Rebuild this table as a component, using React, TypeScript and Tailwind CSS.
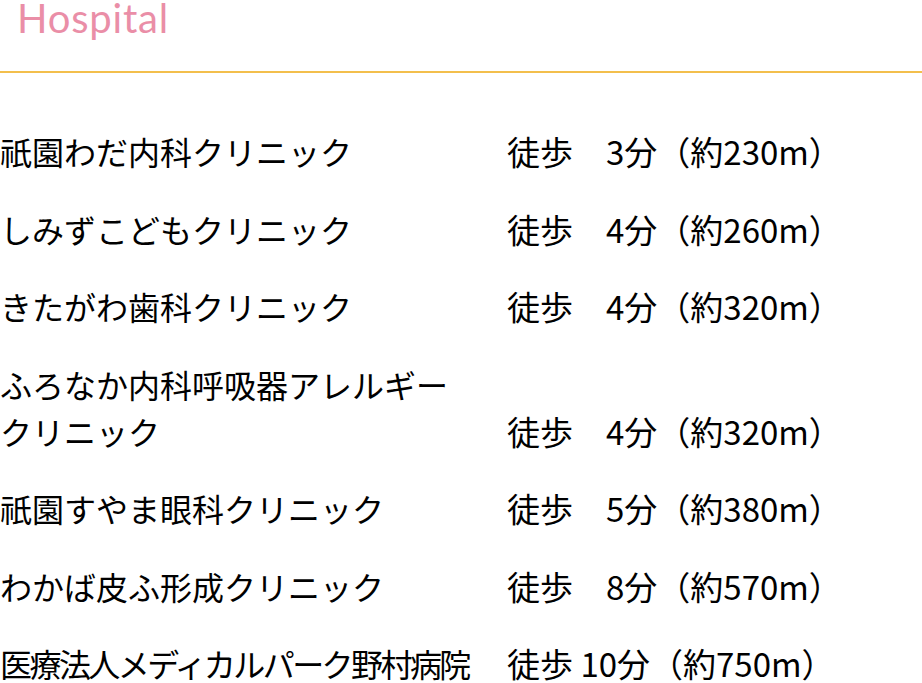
import React from 'react';

type Hospital = {
  name: React.ReactNode;
  walk: string;
  tight?: boolean;
};

const hospitals: Hospital[] = [
  { name: '祇園わだ内科クリニック', walk: '徒歩　3分（約230m）' },
  { name: 'しみずこどもクリニック', walk: '徒歩　4分（約260m）' },
  { name: 'きたがわ歯科クリニック', walk: '徒歩　4分（約320m）' },
  {
    name: (
      <>
        ふろなか内科呼吸器アレルギー
        <br />
        クリニック
      </>
    ),
    walk: '徒歩　4分（約320m）',
  },
  { name: '祇園すやま眼科クリニック', walk: '徒歩　5分（約380m）' },
  { name: 'わかば皮ふ形成クリニック', walk: '徒歩　8分（約570m）' },
  { name: '医療法人メディカルパーク野村病院', walk: '徒歩 10分（約750m）', tight: true },
];

export default function App() {
  return (
    <div className="w-[922px] h-[683px] overflow-hidden bg-white text-black font-['Noto_Sans_CJK_JP','Noto_Sans',sans-serif]">
      {/* 見出し */}
      <div className="h-[73px] border-b-2 border-[#f3bf4c] pl-[17px]">
        <h2 className="font-['Lato','Noto_Sans',sans-serif] text-[40px] leading-[36px] tracking-[0.02em] text-[#ea8ea7] font-normal">
          Hospital
        </h2>
      </div>

      {/* 一覧 */}
      <dl className="mt-[55px] grid grid-cols-[507px_1fr] gap-y-[30.5px] text-[32px] leading-[47px]">
        {hospitals.map((h, i) => (
          <React.Fragment key={i}>
            <dt className={h.tight ? 'whitespace-nowrap tracking-[-0.08em]' : 'whitespace-nowrap'}>{h.name}</dt>
            <dd className="self-end whitespace-pre text-[33px]">{h.walk}</dd>
          </React.Fragment>
        ))}
      </dl>
    </div>
  );
}
